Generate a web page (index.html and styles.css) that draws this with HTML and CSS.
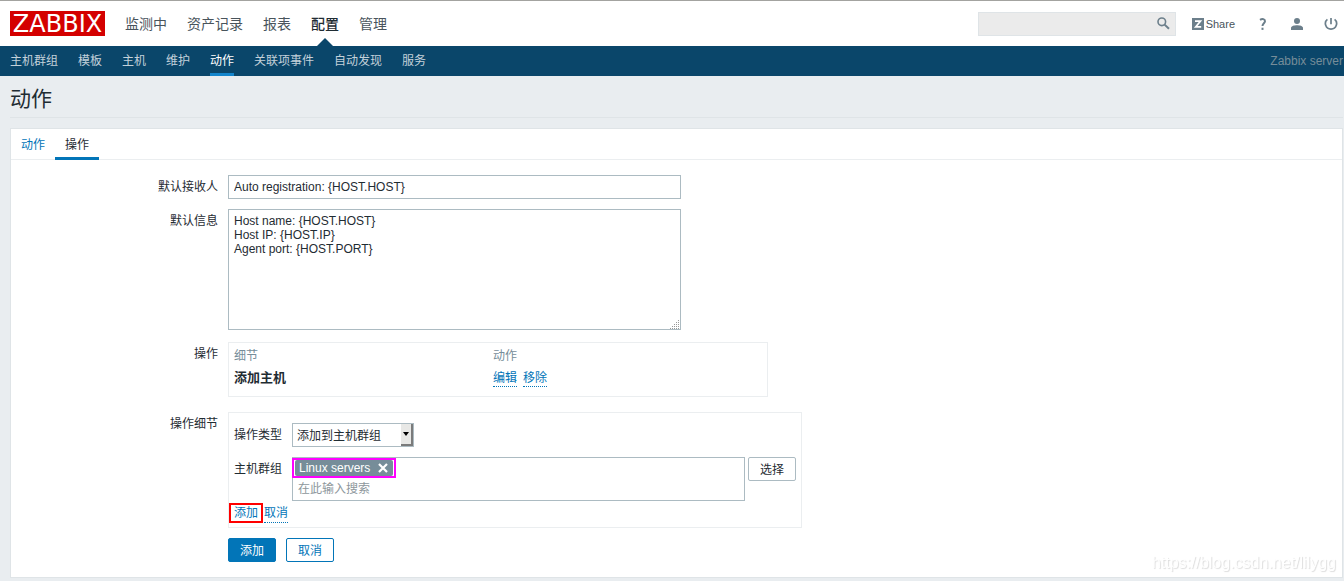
FILE: index.html
```html
<!DOCTYPE html>
<html lang="zh-CN">
<head>
<meta charset="utf-8">
<title>动作</title>
<link rel="stylesheet" href="styles.css">
</head>
<body>
<header class="top">
  <a class="logo" href="#">ZABBIX</a>
  <nav class="main-nav">
    <a href="#">监测中</a>
    <a href="#">资产记录</a>
    <a href="#">报表</a>
    <a href="#" class="current">配置</a>
    <a href="#">管理</a>
  </nav>
  <form class="search">
    <input type="text" aria-label="搜索">
    <button type="button" aria-label="搜索">
      <svg width="13" height="13" viewBox="0 0 13 13" fill="none" stroke="#6c7f8b"><circle cx="4.800" cy="4.800" r="3.800" stroke-width="1.600"/><path d="M7.600 7.600l4.400 4.200" stroke-width="2"/></svg>
    </button>
  </form>
  <a class="share" href="#"><svg width="12" height="12" viewBox="0 0 12 12"><path fill="#6c7f8b" d="M0 0h12v12H0z"/><path d="M3 3.200h5.400L3.800 8.800h5.400" fill="none" stroke="#fff" stroke-width="1.800"/></svg>Share</a>
  <a class="icon help" href="#" aria-label="帮助"><svg width="8" height="12" viewBox="0 0 8 12" fill="none" stroke="#6c7f8b" stroke-width="2"><path d="M1 1.900C3.300.4 6 .9 6 3.200c0 2-2.500 2.200-2.500 4.900"/><path d="M3.500 9.700v2.200"/></svg></a>
  <a class="icon user" href="#" aria-label="用户"><svg width="12" height="12" viewBox="0 0 12 12" fill="#6c7f8b"><circle cx="6" cy="3" r="3"/><path d="M0 12v-2c0-2 3.500-2.700 6-2.700s6 .7 6 2.700v2z"/></svg></a>
  <a class="icon power" href="#" aria-label="退出"><svg width="14" height="12" viewBox="0 0 14 12" fill="none" stroke="#6c7f8b" stroke-width="1.700"><path d="M7 0v6.200M3.400 1.400C-.4 4.200 1.500 11.100 7 11.100s7.400-6.900 3.600-9.700"/></svg></a>
</header>
<nav class="sub-nav">
  <a href="#">主机群组</a>
  <a href="#">模板</a>
  <a href="#">主机</a>
  <a href="#">维护</a>
  <a href="#" class="current">动作</a>
  <a href="#">关联项事件</a>
  <a href="#">自动发现</a>
  <a href="#">服务</a>
  <span class="server">Zabbix server</span>
</nav>
<main class="page">
  <h1>动作</h1>
  <div class="card">
    <nav class="tabs">
      <a href="#">动作</a>
      <a href="#" class="selected">操作</a>
    </nav>
    <form class="form">
      <label class="name" for="recipient">默认接收人</label>
      <input class="field" id="recipient" type="text" value="Auto registration: {HOST.HOST}">

      <label class="name" for="message">默认信息</label>
      <div class="message">
        <textarea class="field" id="message">Host name: {HOST.HOST}
Host IP: {HOST.IP}
Agent port: {HOST.PORT}</textarea>
        <svg class="grip" width="10" height="10" viewBox="0 0 10 10" stroke="#999" stroke-dasharray="1 1"><path d="M8 1.500h2M6 3.500h4M4 5.500h6M2 7.500h8M0 9.500h10"/></svg>
      </div>

      <span class="name">操作</span>
      <div class="box operations">
        <table>
          <thead><tr><th>细节</th><th>动作</th></tr></thead>
          <tbody><tr><td><b>添加主机</b></td><td class="links"><a class="dotted" href="#">编辑</a><a class="dotted" href="#">移除</a></td></tr></tbody>
        </table>
      </div>

      <span class="name">操作细节</span>
      <div class="box details">
        <div class="detail-row">
          <label for="type">操作类型</label>
          <div class="select">
            <select id="type"><option>添加到主机群组</option></select>
            <span class="arrow"></span>
          </div>
        </div>
        <div class="detail-row groups">
          <label for="groups">主机群组</label>
          <div class="multi">
            <span class="mark"><span class="tag">Linux servers<button type="button" aria-label="移除 Linux servers"><svg width="10" height="10" viewBox="0 0 10 10" stroke="#fff" stroke-width="2.200"><path d="M1 1l8 8M9 1L1 9"/></svg></button></span></span>
            <input id="groups" type="text" placeholder="在此输入搜索">
          </div>
          <button type="button" class="btn pick">选择</button>
        </div>
        <div class="detail-actions">
          <span class="red-mark"><a href="#">添加</a></span>
          <a class="dotted" href="#">取消</a>
        </div>
      </div>

      <div class="buttons">
        <button type="button" class="btn primary">添加</button>
        <button type="button" class="btn">取消</button>
      </div>
    </form>
  </div>
</main>
<span class="watermark">https://blog.csdn.net/lilygg</span>
</body>
</html>
```

FILE: styles.css
```css
* { box-sizing: border-box; }
body {
  margin: 0;
  background: #e9edf0;
  color: #1f2c33;
  font: 12px/14px "Liberation Sans", "Noto Sans CJK SC", sans-serif;
}
a { color: #0275b8; text-decoration: none; }
input, textarea, select, button { font: inherit; color: inherit; margin: 0; }

.top {
  display: flex;
  align-items: center;
  height: 46px;
  padding: 0 6px 0 10px;
  border-top: 1px solid #a3a3a0;
  background: #fff;
}
.logo {
  width: 95px;
  height: 25px;
  background: #d40000;
  color: #fff;
  font: 24px/26px "DejaVu Sans", sans-serif;
  text-align: center;
}
.main-nav {
  display: flex;
  gap: 20px;
  height: 100%;
  margin-left: 20px;
  font-size: 14px;
  line-height: 47px;
}
.main-nav a { position: relative; color: #49545c; }
.main-nav .current { color: #1f2c33; font-weight: 500; }
.main-nav .current::after {
  content: "";
  position: absolute;
  left: 50%;
  bottom: 0;
  margin-left: -8px;
  border: 8px solid transparent;
  border-top: 0;
  border-bottom-color: #0a466a;
}
.search {
  display: flex;
  width: 198px;
  height: 24px;
  margin-left: auto;
  border: 1px solid #dfe4e7;
  background: #ebebeb;
}
.search input { flex: 1; min-width: 0; border: 0; background: none; }
.search button {
  display: grid;
  place-items: center;
  width: 22px;
  padding: 0;
  border: 0;
  background: none;
}
.share {
  display: flex;
  align-items: center;
  gap: 2px;
  margin-left: 16px;
  color: #49545c;
  font-size: 11px;
}
.icon { display: flex; }
.help { margin-left: 24px; }
.user { margin-left: 24px; }
.power { margin-left: 21px; }

.sub-nav {
  display: flex;
  gap: 20px;
  height: 30px;
  padding: 0 1px 0 10px;
  background: #0a466a;
  line-height: 31px;
}
.sub-nav a { color: #c3d1da; }
.sub-nav .current { color: #fff; border-bottom: 3px solid #1385cc; }
.server { margin-left: auto; color: #768d99; }

.page { padding: 0 1px 4px 10px; }
h1 {
  margin: 0 0 10px;
  padding: 8px 0 3px;
  border-bottom: 1px solid #dfe4e7;
  font-size: 21px;
  font-weight: 400;
  line-height: 30px;
}
.card { border: 1px solid #dfe4e7; background: #fff; }
.tabs {
  display: flex;
  height: 31px;
  border-bottom: 1px solid #ebeef0;
  line-height: 32px;
}
.tabs a { height: 31px; padding: 0 10px; }
.tabs .selected { color: #1f2c33; border-bottom: 3px solid #0275b8; }

.form {
  display: grid;
  grid-template-columns: 207px 1fr;
  justify-items: start;
  column-gap: 10px;
  padding: 15px 10px 15px 0;
}
.name { justify-self: end; line-height: 25px; }
.field {
  display: block;
  width: 453px;
  padding: 4px 5px;
  border: 1px solid #acbbc2;
  background: #fff;
}
input.field { height: 24px; margin-bottom: 10px; }
.message { position: relative; margin-bottom: 12px; }
textarea.field { height: 121px; resize: none; overflow: hidden; }
.grip { position: absolute; right: 1px; bottom: 1px; }

.box { border: 1px solid #ebeef0; }
.operations { width: 540px; height: 55px; margin-bottom: 15px; }
table { width: 100%; border-collapse: collapse; table-layout: fixed; }
th, td { height: 22px; padding: 4px 5px; text-align: left; line-height: 18px; }
th { color: #768d99; font-weight: 400; }
th:first-child { width: 259px; }
td { padding-top: 0; }
td b { font-size: 13px; }
.links .dotted { margin-right: 6px; }
.dotted { display: inline-block; line-height: 15px; border-bottom: 1px dotted #0275b8; }

.details { width: 574px; padding: 10px 5px 4px; margin-bottom: 10px; }
.detail-row { display: flex; align-items: flex-start; line-height: 25px; }
.detail-row label { width: 58px; }
.select { position: relative; }
select {
  display: block;
  appearance: none;
  width: 122px;
  height: 24px;
  padding: 0 4px;
  border: 1px solid #acbbc2;
  border-radius: 0;
  background: #fff;
}
.arrow {
  position: absolute;
  top: 1px;
  right: 1px;
  display: grid;
  place-items: center;
  width: 12px;
  height: 22px;
  border: solid #7b7b7b;
  border-width: 0 2px 2px 0;
  background: #e8e8e6;
  pointer-events: none;
}
.arrow::after {
  content: "";
  border: 3px solid transparent;
  border-top: 4px solid #000;
  border-bottom: 0;
}
.groups { margin-top: 9px; }
.multi {
  width: 453px;
  height: 44px;
  border: 1px solid #acbbc2;
}
.mark {
  display: block;
  width: 104px;
  height: 20px;
  margin-left: -1px;
  border: 2px solid #f0f;
  padding: 0 1px;
}
.tag {
  display: flex;
  align-items: center;
  justify-content: space-between;
  height: 16px;
  padding: 0 5px 0 4px;
  border-radius: 2px;
  background: #768d99;
  color: #fff;
  line-height: 17px;
}
.tag button { display: flex; padding: 0; border: 0; background: none; }
.multi input {
  display: block;
  width: 100%;
  height: 22px;
  padding: 1px 5px 0;
  border: 0;
  background: none;
}
.multi input::placeholder { color: #8e979c; }
.detail-actions { display: flex; margin: 2px 0 0 -5px; }
.red-mark { height: 20px; padding: 0 3px; border: 2px solid #f00; line-height: 17px; }
.detail-actions .dotted { margin: 3px 0 0 1px; }

.buttons { grid-column: 2; display: flex; gap: 10px; }
.btn {
  height: 24px;
  padding: 1px 11px 0;
  border: 1px solid #0275b8;
  border-radius: 2px;
  background: #fff;
  color: #0275b8;
  line-height: 22px;
}
.primary { background: #0275b8; color: #fff; }
.pick { margin-left: 3px; border-color: #acbbc2; color: #1f2c33; }

.watermark {
  position: fixed;
  right: 8px;
  bottom: 8px;
  color: #fff;
  font-size: 16px;
  line-height: 20px;
  text-shadow: 1px 1px 1px #ddd;
}
```
